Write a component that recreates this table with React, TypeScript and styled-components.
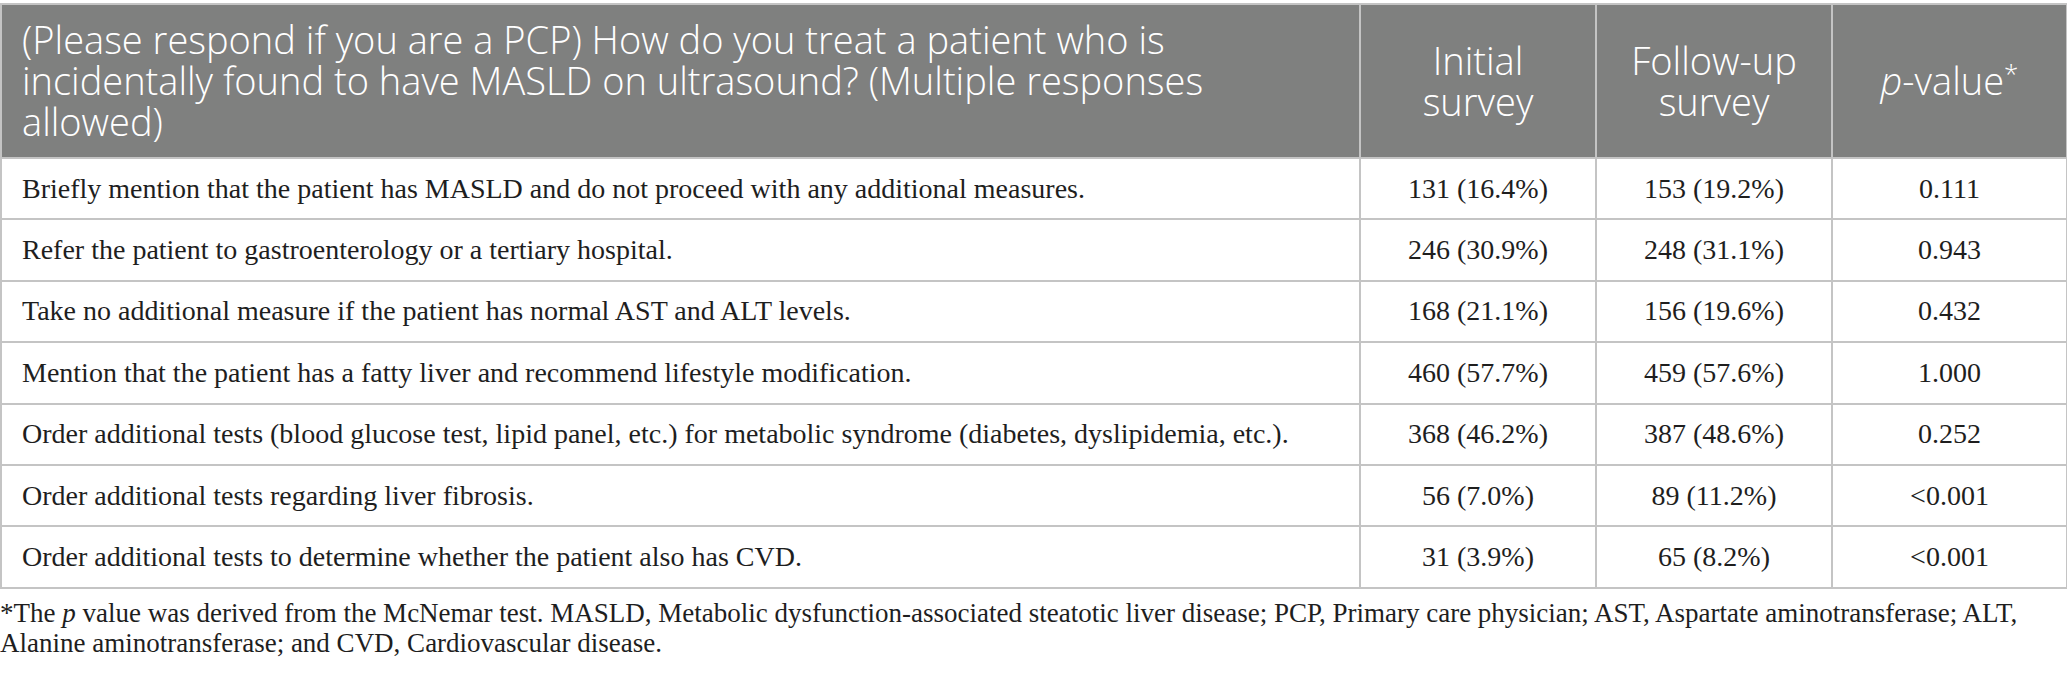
import React from 'react'
import styled, { createGlobalStyle } from 'styled-components'

const GlobalStyle = createGlobalStyle`
  html, body {
    margin: 0;
    padding: 0;
    background: #ffffff;
  }
`

type Row = {
  label: string
  initial: string
  followUp: string
  p: string
}

const rows: Row[] = [
  {
    label: 'Briefly mention that the patient has MASLD and do not proceed with any additional measures.',
    initial: '131 (16.4%)',
    followUp: '153 (19.2%)',
    p: '0.111',
  },
  {
    label: 'Refer the patient to gastroenterology or a tertiary hospital.',
    initial: '246 (30.9%)',
    followUp: '248 (31.1%)',
    p: '0.943',
  },
  {
    label: 'Take no additional measure if the patient has normal AST and ALT levels.',
    initial: '168 (21.1%)',
    followUp: '156 (19.6%)',
    p: '0.432',
  },
  {
    label: 'Mention that the patient has a fatty liver and recommend lifestyle modification.',
    initial: '460 (57.7%)',
    followUp: '459 (57.6%)',
    p: '1.000',
  },
  {
    label: 'Order additional tests (blood glucose test, lipid panel, etc.) for metabolic syndrome (diabetes, dyslipidemia, etc.).',
    initial: '368 (46.2%)',
    followUp: '387 (48.6%)',
    p: '0.252',
  },
  {
    label: 'Order additional tests regarding liver fibrosis.',
    initial: '56 (7.0%)',
    followUp: '89 (11.2%)',
    p: '<0.001',
  },
  {
    label: 'Order additional tests to determine whether the patient also has CVD.',
    initial: '31 (3.9%)',
    followUp: '65 (8.2%)',
    p: '<0.001',
  },
]

const Page = styled.div`
  width: 2066px;
  padding-top: 3px;
`

const Table = styled.table`
  width: 2066px;
  border-collapse: collapse;
  table-layout: fixed;
  border: 2px solid #c4c4c4;
`

const HeadRow = styled.tr`
  background: #7f807f;
`

const HeadCell = styled.th<{ $align?: 'left' | 'center' }>`
  font-family: 'Open Sans', 'Noto Sans', sans-serif;
  font-weight: 300;
  font-size: 38px;
  line-height: 41px;
  color: #ffffff;
  text-align: ${(p) => p.$align || 'center'};
  vertical-align: middle;
  padding: 14px 20px 15px 20px;
  border-left: 2px solid #c4c4c4;
  &:first-child {
    border-left: none;
  }
`

const Star = styled.sup`
  font-size: 26px;
  vertical-align: 12px;
  line-height: 0;
`

const BodyRow = styled.tr`
  border-top: 2px solid #c4c4c4;
`

const Cell = styled.td<{ $align?: 'left' | 'center' }>`
  font-family: 'Liberation Serif', 'Times New Roman', serif;
  font-size: 28px;
  line-height: 30px;
  color: #1e1e1e;
  text-align: ${(p) => p.$align || 'center'};
  padding: 14.7px 20px;
  border-left: 2px solid #c4c4c4;
  white-space: nowrap;
  &:first-child {
    border-left: none;
  }
`

const Footnote = styled.p`
  margin: 9px 0 0 0;
  font-family: 'Liberation Serif', 'Times New Roman', serif;
  font-size: 27px;
  line-height: 30px;
  color: #1e1e1e;
  white-space: nowrap;
`

export default function App() {
  return (
    <Page>
      <GlobalStyle />
      <Table>
        <colgroup>
          <col style={{ width: 1359 }} />
          <col style={{ width: 236 }} />
          <col style={{ width: 236 }} />
          <col style={{ width: 235 }} />
        </colgroup>
        <thead>
          <HeadRow>
            <HeadCell $align="left">
              (Please respond if you are a PCP) How do you treat a patient who is incidentally found to have
              MASLD on ultrasound? (Multiple responses allowed)
            </HeadCell>
            <HeadCell>
              Initial
              <br />
              survey
            </HeadCell>
            <HeadCell>
              Follow-up
              <br />
              survey
            </HeadCell>
            <HeadCell>
              <i>p</i>-value<Star>*</Star>
            </HeadCell>
          </HeadRow>
        </thead>
        <tbody>
          {rows.map((r) => (
            <BodyRow key={r.label}>
              <Cell $align="left">{r.label}</Cell>
              <Cell>{r.initial}</Cell>
              <Cell>{r.followUp}</Cell>
              <Cell>{r.p}</Cell>
            </BodyRow>
          ))}
        </tbody>
      </Table>
      <Footnote>
        *The <i>p</i> value was derived from the McNemar test. MASLD, Metabolic dysfunction-associated steatotic
        liver disease; PCP, Primary care physician; AST, Aspartate aminotransferase; ALT,
        <br />
        Alanine aminotransferase; and CVD, Cardiovascular disease.
      </Footnote>
    </Page>
  )
}
